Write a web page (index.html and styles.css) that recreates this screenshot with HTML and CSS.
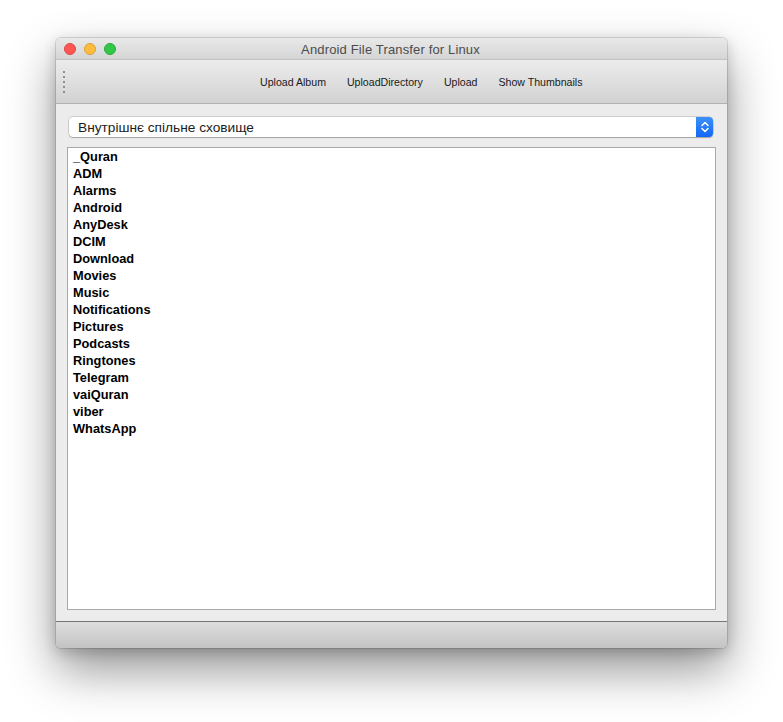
FILE: index.html
```html
<!DOCTYPE html>
<html>
<head>
<meta charset="utf-8">
<link rel="stylesheet" href="styles.css">
</head>
<body>
<div class="window">
  <div class="titlebar">
    <div class="lights">
      <span class="light red"></span>
      <span class="light yellow"></span>
      <span class="light green"></span>
    </div>
    <div class="title">Android File Transfer for Linux</div>
  </div>
  <div class="toolbar">
    <div class="grip"><i></i><i></i><i></i><i></i><i></i></div>
    <div class="tools">
      <span class="tool">Upload Album</span>
      <span class="tool">UploadDirectory</span>
      <span class="tool">Upload</span>
      <span class="tool">Show Thumbnails</span>
    </div>
  </div>
  <div class="content">
    <div class="combo">
      <span class="combo-text">Внутрішнє спільне сховище</span>
      <span class="combo-btn">
        <svg width="10" height="14" viewBox="0 0 10 14"><path d="M2 5.5 L5 2.5 L8 5.5 M2 8.5 L5 11.5 L8 8.5" fill="none" stroke="#fff" stroke-width="1.5" stroke-linecap="round" stroke-linejoin="round"/></svg>
      </span>
    </div>
    <div class="list">
      <div class="item">_Quran</div>
      <div class="item">ADM</div>
      <div class="item">Alarms</div>
      <div class="item">Android</div>
      <div class="item">AnyDesk</div>
      <div class="item">DCIM</div>
      <div class="item">Download</div>
      <div class="item">Movies</div>
      <div class="item">Music</div>
      <div class="item">Notifications</div>
      <div class="item">Pictures</div>
      <div class="item">Podcasts</div>
      <div class="item">Ringtones</div>
      <div class="item">Telegram</div>
      <div class="item">vaiQuran</div>
      <div class="item">viber</div>
      <div class="item">WhatsApp</div>
    </div>
  </div>
  <div class="statusbar"></div>
</div>
</body>
</html>
```

FILE: styles.css
```css
html, body {
  margin: 0;
  padding: 0;
  background: #ffffff;
  height: 100%;
}
body {
  box-sizing: border-box;
  padding: 38px 0 0 56px;
  font-family: "Liberation Sans", Arial, sans-serif;
  overflow: hidden;
}
.window {
  width: 671px;
  height: 610px;
  display: flex;
  flex-direction: column;
  border-radius: 5px;
  overflow: hidden;
  background: #ececec;
  box-shadow: 0 0 0 1px rgba(0,0,0,0.12), 0 4px 14px rgba(0,0,0,0.18), 0 22px 48px rgba(0,0,0,0.42);
}
.titlebar {
  height: 21px;
  flex: none;
  display: flex;
  align-items: center;
  background: linear-gradient(#e9e9e9, #d5d5d5);
  border-bottom: 1px solid #c2c2c2;
}
.lights {
  display: flex;
  gap: 8px;
  padding-left: 8px;
}
.light {
  width: 12px;
  height: 12px;
  border-radius: 50%;
  box-sizing: border-box;
}
.red { background: #fc5753; border: 1px solid #df4744; }
.yellow { background: #fdbc40; border: 1px solid #de9f34; }
.green { background: #33c748; border: 1px solid #27aa35; }
.title {
  flex: 1;
  text-align: center;
  font-size: 13px;
  color: #4c4c4c;
  padding-right: 62px;
  padding-top: 1px;
  letter-spacing: 0.15px;
}
.toolbar {
  height: 43px;
  flex: none;
  display: flex;
  align-items: center;
  background: linear-gradient(#ececec, #d2d2d2);
  border-bottom: 1px solid #b1b1b1;
}
.grip {
  width: 3px;
  margin-left: 7px;
  display: flex;
  flex-direction: column;
  gap: 3px;
}
.grip i {
  display: block;
  width: 2px;
  height: 2px;
  background: #8e8e8e;
}
.tools {
  flex: 1;
  display: flex;
  gap: 21px;
  padding-left: 194px;
}
.tool {
  font-size: 10.6px;
  color: #1a1a1a;
}
.content {
  flex: 1;
  display: flex;
  flex-direction: column;
  padding: 13px 11px 11px 11px;
  min-height: 0;
}
.combo {
  height: 20px;
  margin: 0 3px 0 2px;
  display: flex;
  align-items: center;
  background: #ffffff;
  border-radius: 4px;
  box-shadow: 0 0 0 0.5px rgba(0,0,0,0.25), 0 1px 1px rgba(0,0,0,0.2);
  flex: none;
}
.combo-text {
  flex: 1;
  font-size: 13.7px;
  color: #1c1c1c;
  padding-left: 9px;
}
.combo-btn {
  width: 17px;
  height: 20px;
  display: flex;
  align-items: center;
  justify-content: center;
  background: linear-gradient(#3d91fb, #1467f5);
  border-radius: 0 4px 4px 0;
}
.list {
  margin-top: 10px;
  flex: 1;
  background: #ffffff;
  border: 1px solid #a9a9a9;
  padding: 0 0 0 5px;
}
.item {
  font-size: 12.8px;
  font-weight: bold;
  color: #000;
  height: 17px;
  line-height: 17px;
}
.statusbar {
  height: 26px;
  flex: none;
  border-top: 1px solid #767676;
  background: linear-gradient(#dedede, #c3c3c3);
}
```
